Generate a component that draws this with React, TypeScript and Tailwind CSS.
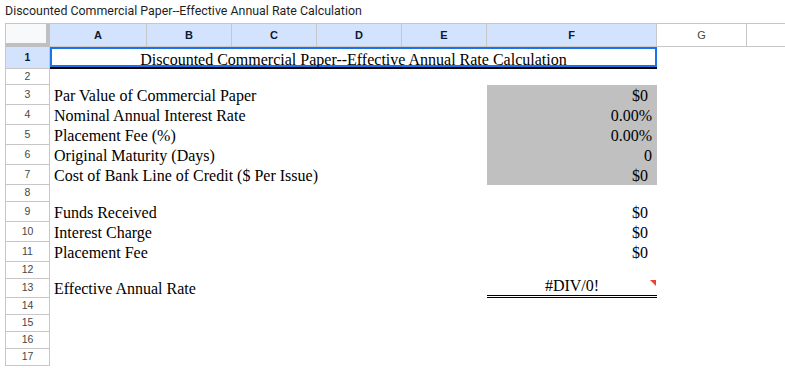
import React from "react";

// column widths A..G, then the partial H column fills the rest
const colWidths = [97, 85, 85, 85, 85, 170, 90];
const colNames = ["A", "B", "C", "D", "E", "F", "G"];

type Row = {
  n: number;
  h: number;
  label?: string;
  value?: string;
  kind?: "money" | "pct" | "err";
  shaded?: boolean;
};

const rows: Row[] = [
  { n: 2, h: 16 },
  { n: 3, h: 20, label: "Par Value of Commercial Paper", value: "$0", kind: "money", shaded: true },
  { n: 4, h: 20, label: "Nominal Annual Interest Rate", value: "0.00%", kind: "pct", shaded: true },
  { n: 5, h: 20, label: "Placement Fee (%)", value: "0.00%", kind: "pct", shaded: true },
  { n: 6, h: 20, label: "Original Maturity (Days)", value: "0", kind: "pct", shaded: true },
  { n: 7, h: 20, label: "Cost of Bank Line of Credit ($ Per Issue)", value: "$0", kind: "money", shaded: true },
  { n: 8, h: 17 },
  { n: 9, h: 20, label: "Funds Received", value: "$0", kind: "money" },
  { n: 10, h: 20, label: "Interest Charge", value: "$0", kind: "money" },
  { n: 11, h: 20, label: "Placement Fee", value: "$0", kind: "money" },
  { n: 12, h: 17 },
  { n: 13, h: 19, label: "Effective Annual Rate", value: "#DIV/0!", kind: "err" },
  { n: 14, h: 17 },
  { n: 15, h: 17 },
  { n: 16, h: 17 },
  { n: 17, h: 17 },
];

const serif = "font-['Liberation_Serif','Times_New_Roman',serif] text-[16px] leading-[18px] text-black";

function RowHeader({ n, h, active }: { n: number; h: number; active?: boolean }) {
  return (
    <div
      className={`w-[45px] shrink-0 flex items-center justify-center border-l border-r border-b border-[#c7c7c7] font-['Liberation_Sans',Arial,sans-serif] text-[10.5px] ${
        active ? "bg-[#d3e3fd] font-bold text-[#0b1a33]" : "bg-white text-[#444746]"
      }`}
      style={{ height: h }}
    >
      {n}
    </div>
  );
}

function DataRow({ row }: { row: Row }) {
  const valueCls =
    row.kind === "money" ? "justify-end pr-[9px]" : row.kind === "pct" ? "justify-end pr-[5px]" : "justify-center";
  return (
    <div className="flex" style={{ height: row.h }}>
      <RowHeader n={row.n} h={row.h} />
      <div className="w-[437px] shrink-0 flex items-end pl-[4px]">
        {row.label && <span className={`${serif} whitespace-nowrap`}>{row.label}</span>}
      </div>
      <div
        className={`w-[170px] shrink-0 relative flex items-end ${valueCls} ${row.shaded ? "bg-[#c0c0c0]" : ""} ${
          row.kind === "err" ? "border-b-[3px] border-double border-black" : ""
        }`}
      >
        {row.value && <span className={serif}>{row.value}</span>}
        {row.kind === "err" && (
          <div className="absolute top-[1px] right-[1px] w-0 h-0 border-l-[6px] border-l-transparent border-t-[6px] border-t-[#ea4335]" />
        )}
      </div>
    </div>
  );
}

export default function App() {
  return (
    <div className="w-[785px] h-[368px] overflow-hidden bg-white">
      <div className="h-[23px] pl-[5px] flex items-center font-['Roboto',Arial,sans-serif] text-[12.4px] text-[#1f1f1f]">
        Discounted Commercial Paper--Effective Annual Rate Calculation
      </div>

      <div className="pl-[5px]">
        {/* column headers */}
        <div className="flex h-[24px] border-t border-[#c7c7c7]">
          <div className="w-[45px] shrink-0 h-full border-l border-l-[#c7c7c7] bg-[#f8f9fa] border-r-4 border-r-[#c0c0c0] border-b-4 border-b-[#c0c0c0]" />
          {colNames.map((c, i) => (
            <div
              key={c}
              className={`shrink-0 h-full flex items-center justify-center border-r border-b border-[#c7c7c7] font-['Liberation_Sans',Arial,sans-serif] text-[11px] ${
                i < 6 ? "bg-[#d3e3fd] font-bold text-[#0b1a33]" : "bg-white text-[#444746]"
              }`}
              style={{ width: colWidths[i] }}
            >
              {c}
            </div>
          ))}
          <div className="flex-1 h-full border-b border-[#c7c7c7]" />
        </div>

        {/* row 1: merged title A1:F1 */}
        <div className="flex h-[22px]">
          <RowHeader n={1} h={22} active />
          <div className="w-[607px] shrink-0 flex flex-col">
            <div className="h-[20px] border-2 border-[#1a73e8] flex items-end justify-center">
              <span className={`${serif} mb-[-4px] whitespace-nowrap`}>
                Discounted Commercial Paper--Effective Annual Rate Calculation
              </span>
            </div>
            <div className="h-[2px] bg-black" />
          </div>
        </div>

        {rows.map((r) => (
          <DataRow key={r.n} row={r} />
        ))}
      </div>
    </div>
  );
}
